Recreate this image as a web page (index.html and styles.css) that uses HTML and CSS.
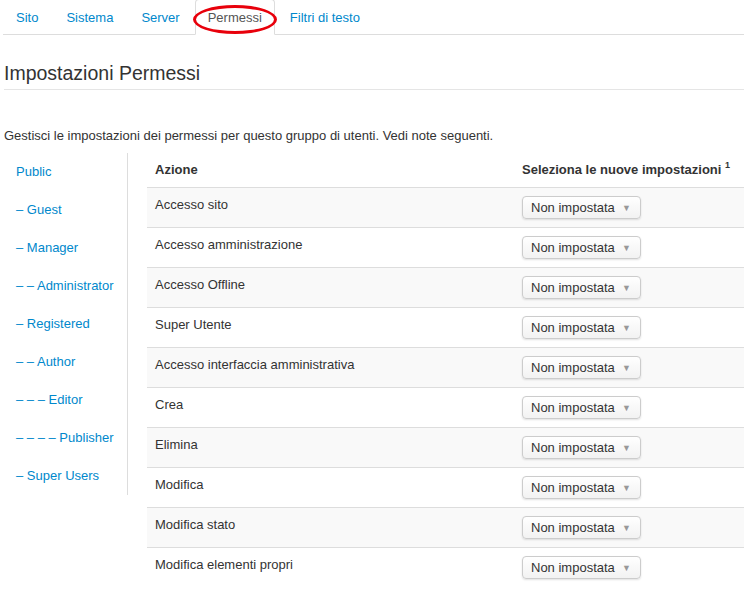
FILE: index.html
```html
<!DOCTYPE html>
<html lang="it">
<head>
<meta charset="utf-8">
<title>Impostazioni Permessi</title>
<link rel="stylesheet" href="styles.css">
</head>
<body>
<div class="page">
  <ul class="tabs">
    <li><a href="#">Sito</a></li>
    <li><a href="#">Sistema</a></li>
    <li><a href="#">Server</a></li>
    <li class="active"><a href="#">Permessi</a><span class="circle"></span></li>
    <li><a href="#">Filtri di testo</a></li>
  </ul>

  <h2 class="page-title">Impostazioni Permessi</h2>

  <p class="desc">Gestisci le impostazioni dei permessi per questo gruppo di utenti. Vedi note seguenti.</p>

  <div class="perm">
    <ul class="groups">
      <li><a href="#">Public</a></li>
      <li><a href="#">– Guest</a></li>
      <li><a href="#">– Manager</a></li>
      <li><a href="#">– – Administrator</a></li>
      <li><a href="#">– Registered</a></li>
      <li><a href="#">– – Author</a></li>
      <li><a href="#">– – – Editor</a></li>
      <li><a href="#">– – – – Publisher</a></li>
      <li><a href="#">– Super Users</a></li>
    </ul>

    <table class="rules">
      <thead>
        <tr><th class="c1">Azione</th><th class="c2">Seleziona le nuove impostazioni <sup>1</sup></th></tr>
      </thead>
      <tbody>
        <tr><td>Accesso sito</td><td><span class="sel">Non impostata<i class="caret">▼</i></span></td></tr>
        <tr><td>Accesso amministrazione</td><td><span class="sel">Non impostata<i class="caret">▼</i></span></td></tr>
        <tr><td>Accesso Offline</td><td><span class="sel">Non impostata<i class="caret">▼</i></span></td></tr>
        <tr><td>Super Utente</td><td><span class="sel">Non impostata<i class="caret">▼</i></span></td></tr>
        <tr><td>Accesso interfaccia amministrativa</td><td><span class="sel">Non impostata<i class="caret">▼</i></span></td></tr>
        <tr><td>Crea</td><td><span class="sel">Non impostata<i class="caret">▼</i></span></td></tr>
        <tr><td>Elimina</td><td><span class="sel">Non impostata<i class="caret">▼</i></span></td></tr>
        <tr><td>Modifica</td><td><span class="sel">Non impostata<i class="caret">▼</i></span></td></tr>
        <tr><td>Modifica stato</td><td><span class="sel">Non impostata<i class="caret">▼</i></span></td></tr>
        <tr><td>Modifica elementi propri</td><td><span class="sel">Non impostata<i class="caret">▼</i></span></td></tr>
      </tbody>
    </table>
  </div>
</div>
</body>
</html>
```

FILE: styles.css
```css
html, body {
  margin: 0;
  padding: 0;
  background: #fff;
}
body {
  font-family: "Liberation Sans", Arial, sans-serif;
  font-size: 13px;
  line-height: 18px;
  color: #333;
  overflow: hidden;
}
a {
  color: #0088cc;
  text-decoration: none;
}
.page {
  padding-left: 4px;
}
.tabs {
  list-style: none;
  display: flex;
  margin: -1px 0 0 -1px;
  padding: 0;
  border-bottom: 1px solid #ddd;
}
.tabs li {
  position: relative;
  margin-bottom: -1px;
}
.tabs a {
  display: block;
  padding: 9px 12px 7px;
  line-height: 18px;
  margin-right: 2px;
  border: 1px solid transparent;
  border-radius: 4px 4px 0 0;
}
.tabs .active a {
  color: #555;
  background: #fff;
  border-color: #ddd #ddd transparent #ddd;
}
.circle {
  position: absolute;
  left: -2px;
  top: 6px;
  width: 78px;
  height: 23px;
  border: 3px solid #e8000b;
  border-radius: 50%;
  pointer-events: none;
}
.page-title {
  margin: 26px 0 0 0;
  font-size: 19.5px;
  line-height: 24px;
  font-weight: normal;
  color: #333;
  padding-bottom: 4px;
  border-bottom: 1px solid #e5e5e5;
}
.desc {
  margin: 37px 0 8px 0;
}
.perm {
  display: flex;
  align-items: flex-start;
}
.groups {
  list-style: none;
  margin: 0;
  padding: 0;
  width: 123px;
  border-right: 1px solid #ddd;
  flex: none;
}
.groups li a {
  display: block;
  padding: 10px 0 10px 12px;
  line-height: 18px;
}
.rules {
  margin-left: 19px;
  border-collapse: collapse;
  flex: 1;
}
.rules th, .rules td {
  text-align: left;
  vertical-align: top;
  padding: 8px;
  line-height: 18px;
}
.rules th {
  font-weight: bold;
}
.rules th.c1 {
  width: 351px;
}
.rules td {
  border-top: 1px solid #ddd;
}
.rules tbody tr:nth-child(odd) td {
  background: #f9f9f9;
}
.rules sup {
  font-size: 9px;
  line-height: 0;
  vertical-align: 6px;
}
.sel {
  display: inline-flex;
  align-items: center;
  width: 101px;
  height: 21px;
  padding: 1px 8px 0;
  border: 1px solid #ccc;
  border-radius: 4px;
  background: linear-gradient(#ffffff, #f2f2f2);
  box-shadow: 0 1px 2px rgba(0,0,0,0.12);
  color: #333;
  vertical-align: top;
  justify-content: space-between;
  box-sizing: content-box;
  height: 20px;
}
.caret {
  font-style: normal;
  font-size: 9px;
  color: #999;
  margin-right: 1px;
}
```
